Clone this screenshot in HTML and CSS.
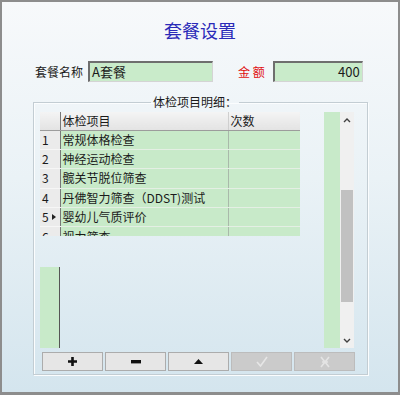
FILE: index.html
```html
<!DOCTYPE html>
<html lang="zh-CN">
    <head>
        <meta charset="UTF-8" />
        <title>套餐设置</title>
        <link rel="stylesheet" href="styles.css">
    </head>
    <body>
        <div class="window">
            <div class="title">套餐设置</div>

            <div class="form-row">
                <span class="label">套餐名称</span>
                <div class="field field-name">A套餐</div>
                <span class="label label-red">金 额</span>
                <div class="field field-amount">400</div>
            </div>

            <fieldset class="group">
                <legend>体检项目明细：</legend>

                <div class="list">
                    <div class="grid-col">
                        <div class="table-wrap">
                            <table class="grid">
                                <thead>
                                    <tr>
                                        <th class="rh"></th>
                                        <th class="c-name">体检项目</th>
                                        <th class="c-count">次数</th>
                                    </tr>
                                </thead>
                                <tbody>
                                    <tr><td class="rh">1</td><td>常规体格检查</td><td></td></tr>
                                    <tr><td class="rh">2</td><td>神经运动检查</td><td></td></tr>
                                    <tr><td class="rh">3</td><td>髋关节脱位筛查</td><td></td></tr>
                                    <tr><td class="rh">4</td><td>丹佛智力筛查（DDST)测试</td><td></td></tr>
                                    <tr><td class="rh">5<span class="current"></span></td><td>婴幼儿气质评价</td><td></td></tr>
                                    <tr><td class="rh">6</td><td>视力筛查</td><td></td></tr>
                                </tbody>
                            </table>
                        </div>
                        <div class="spacer"></div>
                        <div class="strip-left"></div>
                    </div>

                    <div class="strip-right"></div>

                    <div class="scrollbar">
                        <div class="sb-btn">
                            <svg width="8" height="5" viewBox="0 0 8 5"><path d="M1 4 L4 1 L7 4" fill="none" stroke="#404040" stroke-width="1.4"/></svg>
                        </div>
                        <div class="sb-track"><div class="sb-thumb"></div></div>
                        <div class="sb-btn">
                            <svg width="8" height="5" viewBox="0 0 8 5"><path d="M1 1 L4 4 L7 1" fill="none" stroke="#404040" stroke-width="1.4"/></svg>
                        </div>
                    </div>
                </div>

                <div class="buttons">
                    <button class="btn">
                        <svg width="9" height="9" viewBox="0 0 9 9"><path d="M4.5 0 V9 M0 4.5 H9" stroke="#111" stroke-width="2.6"/></svg>
                    </button>
                    <button class="btn">
                        <svg width="10" height="4" viewBox="0 0 10 4"><rect width="10" height="3.4" fill="#111"/></svg>
                    </button>
                    <button class="btn">
                        <svg width="9" height="5" viewBox="0 0 9 5"><path d="M0 5 L4.5 0 L9 5 Z" fill="#111"/></svg>
                    </button>
                    <button class="btn btn-off">
                        <svg width="12" height="11" viewBox="0 0 12 11"><path d="M1 6 L4.5 10 L11 1" fill="none" stroke="#e6e6e6" stroke-width="1.6"/></svg>
                    </button>
                    <button class="btn btn-off">
                        <svg width="12" height="12" viewBox="0 0 12 12"><path d="M2 1 L10 11 M10 1 L2 11 M3 6 H9" fill="none" stroke="#e4e4e4" stroke-width="1.6"/></svg>
                    </button>
                </div>
            </fieldset>
        </div>
    </body>
</html>
```

FILE: styles.css
```css
body {
    margin: 0;
    font-family: "Noto Sans CJK SC", "Liberation Sans", sans-serif;
    color: #1a1a1a;
}

.window {
    box-sizing: border-box;
    width: 400px;
    height: 395px;
    border: 2px solid #8d8d8d;
    border-bottom-width: 3px;
    background: linear-gradient(to bottom, #f7f9fb 0%, #eaf2f6 45%, #d4e5ee 100%);
}

.title {
    padding-top: 18px;
    height: 20px;
    line-height: 20px;
    text-align: center;
    font-size: 18px;
    color: #2a2ab8;
}

.form-row {
    display: flex;
    align-items: center;
    margin-top: 21px;
    margin-left: 33px;
    height: 21px;
}

.label {
    font-size: 12px;
    line-height: 21px;
}

.label-red {
    color: #e01010;
    margin-left: 25px;
}

.field {
    box-sizing: border-box;
    height: 21px;
    line-height: 18px;
    font-size: 13px;
    background-color: #c9ebca;
    border-top: 2px solid #6e6e6e;
    border-left: 2px solid #6e6e6e;
    border-right: 1px solid #d4d4d4;
    border-bottom: 1px solid #d4d4d4;
    padding: 0 2px;
}

.field-name {
    width: 125px;
    margin-left: 5px;
}

.field-amount {
    width: 90px;
    margin-left: 8px;
    text-align: right;
}

.group {
    box-sizing: border-box;
    width: 335px;
    margin: 12px 0 0 31px;
    padding: 2px 11px 3px 6px;
    border: 1px solid #c3cdd3;
    box-shadow: 1px 1px 0 #fbfdfe, inset 1px 1px 0 #fbfdfe;
}

.group legend {
    margin-left: 111px;
    padding: 0 2px;
    font-size: 12px;
    line-height: 16px;
}

.list {
    display: flex;
    height: 236px;
}

.grid-col {
    display: flex;
    flex-direction: column;
    width: 260px;
}

.table-wrap {
    height: 124px;
    overflow: hidden;
}

.grid {
    border-collapse: collapse;
    table-layout: fixed;
    width: 260px;
    font-size: 12px;
}

.grid th,
.grid td {
    box-sizing: border-box;
    padding: 0 0 0 2px;
    text-align: left;
    font-weight: normal;
    white-space: nowrap;
    overflow: hidden;
}

.grid th {
    height: 18px;
    line-height: 17px;
    background: linear-gradient(to bottom, #f4f4f4, #e3e3e3);
    border-bottom: 1px solid #9c9c9c;
    border-right: 1px solid #cfcfcf;
}

.grid td {
    height: 19.4px;
    line-height: 18px;
    background-color: #c8eac9;
    border-bottom: 1px solid #e4efe4;
    border-right: 1px solid #a9b9aa;
}

.grid .rh {
    width: 20px;
    position: relative;
    background: #ebebeb;
    border-right: 1px solid #777;
    border-bottom: 1px solid #f6f6f6;
}

.grid th.rh {
    background: linear-gradient(to bottom, #f4f4f4, #e3e3e3);
    border-bottom: 1px solid #9c9c9c;
}

.c-name {
    width: 168px;
}

.c-count {
    width: 72px;
}

.current {
    position: absolute;
    left: 12px;
    top: 6px;
    border-left: 4px solid #222;
    border-top: 3.5px solid transparent;
    border-bottom: 3.5px solid transparent;
}

.spacer {
    flex: 1;
}

.strip-left {
    width: 19px;
    height: 81px;
    background-color: #c8eac9;
    border-right: 1px solid #555;
}

.strip-right {
    width: 16px;
    margin-left: 24px;
    background-color: #c8eac9;
}

.scrollbar {
    display: flex;
    flex-direction: column;
    width: 14px;
    background-color: #f0f0f0;
}

.sb-btn {
    height: 16px;
    display: flex;
    align-items: center;
    justify-content: center;
}

.sb-track {
    flex: 1;
}

.sb-thumb {
    margin: 62px 1px 0 1px;
    height: 112px;
    background-color: #c1c1c1;
}

.buttons {
    display: flex;
    gap: 2px;
    margin: 4px 0 0 2px;
}

.btn {
    box-sizing: border-box;
    width: 61px;
    height: 19px;
    padding: 0;
    display: flex;
    align-items: center;
    justify-content: center;
    background-color: #e6e6e6;
    border: 1px solid #acacac;
}

.btn-off {
    background-color: #cbcbcb;
    border-color: #bcbcbc;
}
```
